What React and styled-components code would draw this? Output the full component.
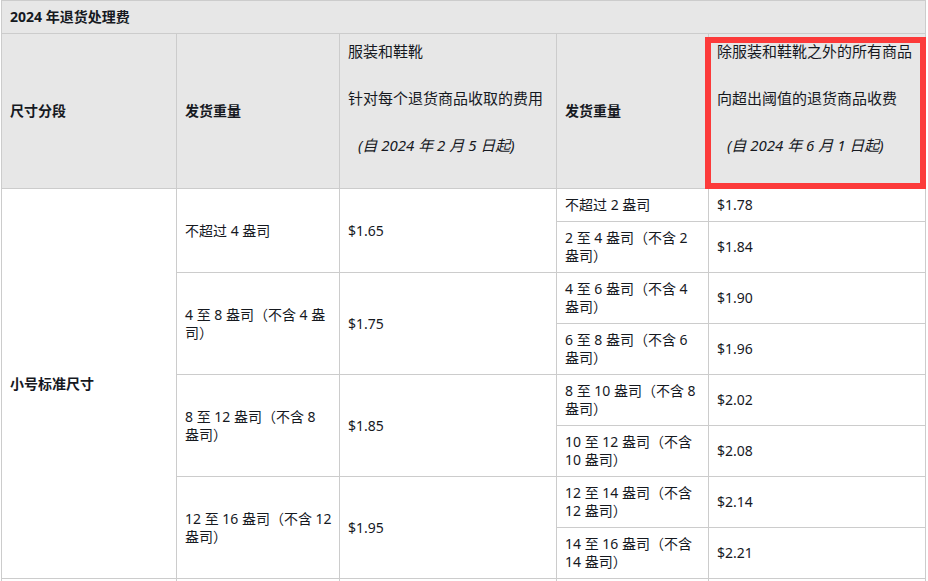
import React from 'react';
import styled, { createGlobalStyle } from 'styled-components';

const GlobalStyle = createGlobalStyle`
  body {
    margin: 0;
    background: #ffffff;
    font-family: "Noto Sans", "Noto Sans CJK SC", sans-serif;
    color: #16191f;
  }
`;

const StyledWrapper = styled.div`
  padding-left: 1px;
`;

const StyledTable = styled.table`
  width: 924px;
  table-layout: fixed;
  border-collapse: collapse;
  font-size: 14px;
  line-height: 18px;
`;

const StyledCell = styled.td`
  border: 1px solid #cccccc;
  padding: ${({ stub }) => (stub ? '0' : '7px 4px 7px 8px')};
  height: ${({ stub }) => (stub ? '2px' : 'auto')};
  vertical-align: middle;
  text-align: left;
  word-break: keep-all;
  font-weight: ${({ bold }) => (bold ? 700 : 400)};
  background: ${({ head }) => (head ? '#e7e7e7' : '#ffffff')};
  position: relative;
`;

const StyledHeadText = styled.p`
  margin: 0 0 27px;
  font-size: 15px;
  line-height: 20px;
`;

const StyledDate = styled.p`
  margin: 0 0 26px;
  padding-left: 10px;
  font-size: 15px;
  line-height: 20px;
  font-style: italic;
`;

const StyledHighlight = styled.span`
  position: absolute;
  left: -4px;
  top: 3px;
  right: -1px;
  bottom: -1px;
  border: 6px solid #fc3a3a;
  pointer-events: none;
`;

// \u200b marks where the original breaks inside a word
const groups = [
  {
    weight: '不超过 4 盎司',
    fee: '$1.65',
    rows: [
      ['不超过 2 盎司', '$1.78'],
      ['2 至 4 盎司（不含 2 盎司）', '$1.84'],
    ],
  },
  {
    weight: '4 至 8 盎司（不含 4 盎\u200b司）',
    fee: '$1.75',
    rows: [
      ['4 至 6 盎司（不含 4 盎司）', '$1.90'],
      ['6 至 8 盎司（不含 6 盎司）', '$1.96'],
    ],
  },
  {
    weight: '8 至 12 盎司（不含 8 盎司）',
    fee: '$1.85',
    rows: [
      ['8 至 10 盎司（不含 8 盎司）', '$2.02'],
      ['10 至 12 盎司（不含 10 盎司）', '$2.08'],
    ],
  },
  {
    weight: '12 至 16 盎司（不含 12 盎司）',
    fee: '$1.95',
    rows: [
      ['12 至 14 盎司（不含 12 盎司）', '$2.14'],
      ['14 至 16 盎司（不含 14 盎司）', '$2.21'],
    ],
  },
];

const App = () => (
  <StyledWrapper>
    <GlobalStyle />
    <StyledTable>
      <colgroup>
        <col style={{ width: 175 }} />
        <col style={{ width: 163 }} />
        <col style={{ width: 217 }} />
        <col style={{ width: 152 }} />
        <col style={{ width: 217 }} />
      </colgroup>
      <thead>
        <tr>
          <StyledCell as="th" head bold colSpan={5}>
            2024 年退货处理费
          </StyledCell>
        </tr>
        <tr>
          <StyledCell as="th" head bold>
            尺寸分段
          </StyledCell>
          <StyledCell as="th" head bold>
            发货重量
          </StyledCell>
          <StyledCell as="th" head>
            <StyledHeadText>服装和鞋靴</StyledHeadText>
            <StyledHeadText>针对每个退货商品收取的费用</StyledHeadText>
            <StyledDate>(自 2024 年 2 月 5 日起)</StyledDate>
          </StyledCell>
          <StyledCell as="th" head bold>
            发货重量
          </StyledCell>
          <StyledCell as="th" head>
            <StyledHeadText>除服装和鞋靴之外的所有商品</StyledHeadText>
            <StyledHeadText>向超出阈值的退货商品收费</StyledHeadText>
            <StyledDate>(自 2024 年 6 月 1 日起)</StyledDate>
            <StyledHighlight />
          </StyledCell>
        </tr>
      </thead>
      <tbody>
        {groups.map((group, gi) =>
          group.rows.map(([weight, fee], ri) => (
            <tr key={weight}>
              {gi === 0 && ri === 0 ? (
                <StyledCell bold rowSpan={8}>
                  小号标准尺寸
                </StyledCell>
              ) : null}
              {ri === 0 ? (
                <>
                  <StyledCell rowSpan={2}>{group.weight}</StyledCell>
                  <StyledCell rowSpan={2}>{group.fee}</StyledCell>
                </>
              ) : null}
              <StyledCell>{weight}</StyledCell>
              <StyledCell>{fee}</StyledCell>
            </tr>
          )),
        )}
        <tr>
          <StyledCell stub />
          <StyledCell stub />
          <StyledCell stub />
          <StyledCell stub />
          <StyledCell stub />
        </tr>
      </tbody>
    </StyledTable>
  </StyledWrapper>
);

export default App;
